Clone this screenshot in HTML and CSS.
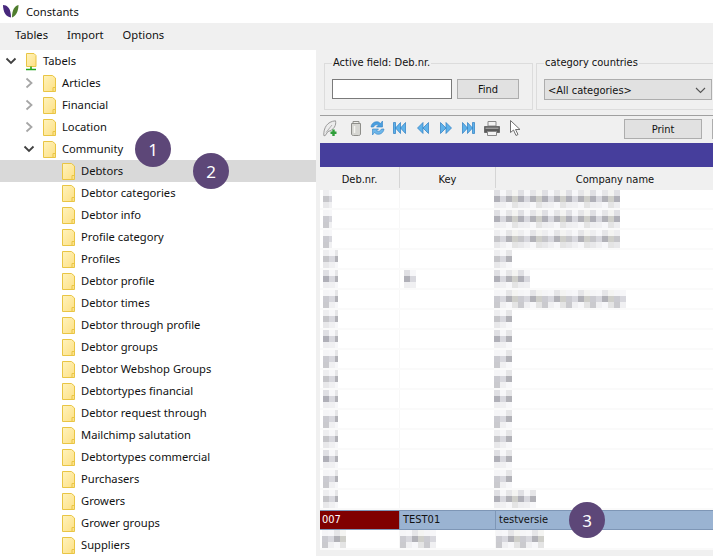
FILE: index.html
```html
<!DOCTYPE html>
<html>
<head>
  <title>Constants</title>
  <link rel="stylesheet" href="styles.css">
</head>
<body>
  <svg class="sprites" width="0" height="0">
    <defs>
      <linearGradient id="folderFill" x1="0" y1="0" x2="1" y2="1">
        <stop offset="0" stop-color="#fff3bd"/>
        <stop offset="1" stop-color="#fde084"/>
      </linearGradient>
      <symbol id="folder" viewBox="0 0 13 17">
        <path d="M0.5 0.5H9.5L12.5 3V16.5H0.5Z" fill="url(#folderFill)" stroke="#e9c544"/>
        <path d="M10 16V12.5H12.5" fill="none" stroke="#e9c544"/>
      </symbol>
      <symbol id="chev-right" viewBox="0 0 10 12">
        <path d="M2.5 1.5L7.5 6L2.5 10.5" fill="none" stroke="#a6a6a6" stroke-width="1.8"/>
      </symbol>
      <symbol id="chev-down" viewBox="0 0 12 10">
        <path d="M1.5 2.5L6 7L10.5 2.5" fill="none" stroke="#404040" stroke-width="1.8"/>
      </symbol>
    </defs>
  </svg>

  <div class="titlebar">
    <svg class="logo" width="16" height="13" viewBox="0 0 16 13">
      <path d="M0 0C4 0 8 3 8 12.5C3 12 0 7 0 0Z" fill="#47287c"/>
      <path d="M15.5 0C11.5 1 9 5 9 12.5C13 11 15.5 6 15.5 0Z" fill="#4f7d2e"/>
    </svg>
    <span>Constants</span>
  </div>

  <div class="menubar">
    <span>Tables</span>
    <span>Import</span>
    <span>Options</span>
  </div>

  <div class="main">
    <!-- Tree -->
    <div class="tree">
      <div class="node">
        <svg class="chev root-chev" width="12" height="10"><use href="#chev-down"/></svg>
        <svg class="root-icon" width="12" height="18" viewBox="0 0 12 18">
          <path d="M1.5 0.5H9L11 2.5V13.5H1.5Z" fill="url(#folderFill)" stroke="#e9c544"/>
          <path d="M6 13.5V16M1 16.5H11" fill="none" stroke="#22a51c" stroke-width="1.6"/>
        </svg>
        <span>Tabels</span>
      </div>
      <div class="node level-1">
        <svg class="chev" width="10" height="12"><use href="#chev-right"/></svg>
        <svg class="folder" width="13" height="17"><use href="#folder"/></svg>
        <span>Articles</span>
      </div>
      <div class="node level-1">
        <svg class="chev" width="10" height="12"><use href="#chev-right"/></svg>
        <svg class="folder" width="13" height="17"><use href="#folder"/></svg>
        <span>Financial</span>
      </div>
      <div class="node level-1">
        <svg class="chev" width="10" height="12"><use href="#chev-right"/></svg>
        <svg class="folder" width="13" height="17"><use href="#folder"/></svg>
        <span>Location</span>
      </div>
      <div class="node level-1 open">
        <svg class="chev" width="12" height="10"><use href="#chev-down"/></svg>
        <svg class="folder" width="13" height="17"><use href="#folder"/></svg>
        <span>Community</span>
      </div>
      <div class="node level-2 selected"><svg class="folder" width="13" height="17"><use href="#folder"/></svg><span>Debtors</span></div>
      <div class="node level-2"><svg class="folder" width="13" height="17"><use href="#folder"/></svg><span>Debtor categories</span></div>
      <div class="node level-2"><svg class="folder" width="13" height="17"><use href="#folder"/></svg><span>Debtor info</span></div>
      <div class="node level-2"><svg class="folder" width="13" height="17"><use href="#folder"/></svg><span>Profile category</span></div>
      <div class="node level-2"><svg class="folder" width="13" height="17"><use href="#folder"/></svg><span>Profiles</span></div>
      <div class="node level-2"><svg class="folder" width="13" height="17"><use href="#folder"/></svg><span>Debtor profile</span></div>
      <div class="node level-2"><svg class="folder" width="13" height="17"><use href="#folder"/></svg><span>Debtor times</span></div>
      <div class="node level-2"><svg class="folder" width="13" height="17"><use href="#folder"/></svg><span>Debtor through profile</span></div>
      <div class="node level-2"><svg class="folder" width="13" height="17"><use href="#folder"/></svg><span>Debtor groups</span></div>
      <div class="node level-2"><svg class="folder" width="13" height="17"><use href="#folder"/></svg><span>Debtor Webshop Groups</span></div>
      <div class="node level-2"><svg class="folder" width="13" height="17"><use href="#folder"/></svg><span>Debtortypes financial</span></div>
      <div class="node level-2"><svg class="folder" width="13" height="17"><use href="#folder"/></svg><span>Debtor request through</span></div>
      <div class="node level-2"><svg class="folder" width="13" height="17"><use href="#folder"/></svg><span>Mailchimp salutation</span></div>
      <div class="node level-2"><svg class="folder" width="13" height="17"><use href="#folder"/></svg><span>Debtortypes commercial</span></div>
      <div class="node level-2"><svg class="folder" width="13" height="17"><use href="#folder"/></svg><span>Purchasers</span></div>
      <div class="node level-2"><svg class="folder" width="13" height="17"><use href="#folder"/></svg><span>Growers</span></div>
      <div class="node level-2"><svg class="folder" width="13" height="17"><use href="#folder"/></svg><span>Grower groups</span></div>
      <div class="node level-2"><svg class="folder" width="13" height="17"><use href="#folder"/></svg><span>Suppliers</span></div>
    </div>

    <!-- Right side -->
    <div class="detail">
      <div class="filters">
        <fieldset class="group group-find">
          <legend>Active field: Deb.nr.</legend>
          <div class="group-row">
            <div class="text-input"></div>
            <div class="button find-button">Find</div>
          </div>
        </fieldset>
        <fieldset class="group group-category">
          <legend>category countries</legend>
          <div class="combo">
            <span>&lt;All categories&gt;</span>
            <svg width="11" height="7" viewBox="0 0 11 7"><path d="M1 1L5.5 5.5L10 1" fill="none" stroke="#555" stroke-width="1.1"/></svg>
          </div>
        </fieldset>
      </div>

      <div class="toolbar">
        <!-- new -->
        <svg class="tool tool-new" width="15" height="17" viewBox="0 0 15 17">
          <path d="M0.8 15.5C0.5 8 4 1.5 12.5 0.8C13.5 5 11 10 5 11.5L2 15.8Z" fill="#ececec" stroke="#9a9a9a"/>
          <path d="M3 12.5L9 5" stroke="#b0b0b0"/>
          <path d="M10.5 9.5V16M7.5 12.8H13.5" stroke="#2f9e3a" stroke-width="2.4"/>
        </svg>
        <!-- delete -->
        <svg class="tool tool-trash" width="12" height="16" viewBox="0 0 12 16">
          <path d="M1.5 3.5H10.5V14C10.5 15 9.5 15.5 8.5 15.5H3.5C2.5 15.5 1.5 15 1.5 14Z" fill="#d6d6d2" stroke="#8e8e8a"/>
          <path d="M3 1.5H9V3.5H3Z" fill="#eeeeea" stroke="#8e8e8a"/>
          <path d="M4.5 6V13" stroke="#f4f4f0" stroke-width="1.5"/>
        </svg>
        <!-- refresh -->
        <svg class="tool tool-refresh" width="15" height="16" viewBox="0 0 15 16">
          <path d="M1 7C1.5 3 5 1 8.5 2L10.5 3.5L12.5 1V7H6.5L8.5 5C6.5 4 4.5 5 3.5 7Z" fill="#4a9fdf" stroke="#2f7fc4" stroke-width="0.6"/>
          <path d="M14 9C13.5 13 10 15 6.5 14L4.5 12.5L2.5 15V9H8.5L6.5 11C8.5 12 10.5 11 11.5 9Z" fill="#6db7ea" stroke="#2f7fc4" stroke-width="0.6"/>
        </svg>
        <!-- first -->
        <svg class="tool tool-first" width="13" height="12" viewBox="0 0 13 12">
          <path d="M0.5 0.5H2.5V11.5H0.5ZM7.5 0.5V11.5L2.5 6ZM12.5 0.5V11.5L7.5 6Z" fill="#5fb2ea" stroke="#2b7cc2" stroke-width="0.7"/>
        </svg>
        <!-- prev -->
        <svg class="tool tool-prev" width="12" height="12" viewBox="0 0 12 12">
          <path d="M6 0.5V11.5L0.5 6ZM11.5 0.5V11.5L6 6Z" fill="#5fb2ea" stroke="#2b7cc2" stroke-width="0.7"/>
        </svg>
        <!-- next -->
        <svg class="tool tool-next" width="12" height="12" viewBox="0 0 12 12">
          <path d="M0.5 0.5V11.5L6 6ZM6 0.5V11.5L11.5 6Z" fill="#5fb2ea" stroke="#2b7cc2" stroke-width="0.7"/>
        </svg>
        <!-- last -->
        <svg class="tool tool-last" width="13" height="12" viewBox="0 0 13 12">
          <path d="M0.5 0.5V11.5L5.5 6ZM5.5 0.5V11.5L10.5 6ZM10.5 0.5H12.5V11.5H10.5Z" fill="#5fb2ea" stroke="#2b7cc2" stroke-width="0.7"/>
        </svg>
        <!-- print -->
        <svg class="tool tool-print" width="16" height="15" viewBox="0 0 16 15">
          <path d="M4 0.5H12V5H4Z" fill="#f2f2f2" stroke="#8a8a8a"/>
          <path d="M0.5 5.5H15.5V11.5H0.5Z" fill="#5b5b5b" stroke="#6b6b6b"/>
          <path d="M1.5 6.5H14.5V8H1.5Z" fill="#9a9a9a"/>
          <path d="M3.5 10.5H12.5V14.5H3.5Z" fill="#f4f4f4" stroke="#8a8a8a"/>
        </svg>
        <!-- pointer -->
        <svg class="tool tool-pointer" width="11" height="16" viewBox="0 0 11 16">
          <path d="M0.5 0.5V12.5L3.5 10L6 15.5L8 14.5L5.5 9.5H10Z" fill="#fff" stroke="#6f6f6f"/>
        </svg>
        <div class="button print-button">Print</div>
        <div class="button cut-button"></div>
      </div>

      <div class="banner"></div>

      <div class="grid-head">
        <div class="head-cell">Deb.nr.</div>
        <div class="head-cell">Key</div>
        <div class="head-cell last">Company name</div>
      </div>

      <div class="grid-body">
        <div class="row"><div class="cell"><i class="smudge id-s"></i></div><div class="cell"></div><div class="cell"><i class="smudge co w21 tone-a"></i></div></div>
        <div class="row"><div class="cell"><i class="smudge id-s tone-b"></i></div><div class="cell"></div><div class="cell"><i class="smudge co w21 tone-a"></i></div></div>
        <div class="row"><div class="cell"><i class="smudge id-s tone-b"></i></div><div class="cell"></div><div class="cell"><i class="smudge co w21"></i></div></div>
        <div class="row"><div class="cell"><i class="smudge id-l"></i></div><div class="cell"></div><div class="cell"><i class="smudge co w3"></i></div></div>
        <div class="row"><div class="cell"><i class="smudge id-l tone-a"></i></div><div class="cell"><i class="smudge key w2 tone-a"></i></div><div class="cell"><i class="smudge co w6 tone-a"></i></div></div>
        <div class="row"><div class="cell"><i class="smudge id-l tone-b"></i></div><div class="cell"></div><div class="cell"><i class="smudge co w22 tone-b"></i></div></div>
        <div class="row"><div class="cell"><i class="smudge id-l"></i></div><div class="cell"></div><div class="cell"><i class="smudge co w3"></i></div></div>
        <div class="row"><div class="cell"><i class="smudge id-l tone-a"></i></div><div class="cell"></div><div class="cell"><i class="smudge co w3 tone-a"></i></div></div>
        <div class="row"><div class="cell"><i class="smudge id-l tone-b"></i></div><div class="cell"></div><div class="cell"><i class="smudge co w3 tone-b"></i></div></div>
        <div class="row"><div class="cell"><i class="smudge id-l"></i></div><div class="cell"></div><div class="cell"><i class="smudge co w3 tone-b"></i></div></div>
        <div class="row"><div class="cell"><i class="smudge id-l tone-a"></i></div><div class="cell"></div><div class="cell"><i class="smudge co w3 tone-a"></i></div></div>
        <div class="row"><div class="cell"><i class="smudge id-l tone-b"></i></div><div class="cell"></div><div class="cell"><i class="smudge co w3 tone-b"></i></div></div>
        <div class="row"><div class="cell"><i class="smudge id-l"></i></div><div class="cell"></div><div class="cell"><i class="smudge co w3"></i></div></div>
        <div class="row"><div class="cell"><i class="smudge id-l tone-a"></i></div><div class="cell"></div><div class="cell"><i class="smudge co w3 tone-a"></i></div></div>
        <div class="row"><div class="cell"><i class="smudge id-l tone-b"></i></div><div class="cell"></div><div class="cell"><i class="smudge co w3 tone-b"></i></div></div>
        <div class="row"><div class="cell"><i class="smudge id-l"></i></div><div class="cell"></div><div class="cell"><i class="smudge co w7 tone-a"></i></div></div>
        <div class="row current">
          <div class="cell id">007</div>
          <div class="cell">TEST01</div>
          <div class="cell">testversie</div>
        </div>
        <div class="row"><div class="cell"><i class="smudge id-w tone-b"></i></div><div class="cell"><i class="smudge key-w w6 tone-b"></i></div><div class="cell"><i class="smudge co-w w8 tone-b"></i></div></div>
      </div>
    </div>
  </div>

  <div class="badge badge-1">1</div>
  <div class="badge badge-2">2</div>
  <div class="badge badge-3">3</div>
</body>
</html>
```

FILE: styles.css
```css
html, body {
  margin: 0;
  padding: 0;
  height: 556px;
  overflow: hidden;
}
body {
  position: relative;
  font-family: 'Noto Sans', sans-serif;
  font-size: 11.2px;
  color: #111;
  background-color: white;
}
.sprites {
  position: absolute;
}
.titlebar {
  display: flex;
  align-items: center;
  height: 23px;
  padding-left: 3px;
  gap: 7px;
}
.menubar {
  box-sizing: border-box;
  display: flex;
  align-items: center;
  gap: 19px;
  height: 27px;
  padding: 0 0 4px 15px;
  background-color: #f0f0f0;
}
.main {
  display: flex;
  height: 506px;
}

/* tree */
.tree {
  width: 316px;
  flex-shrink: 0;
  background-color: white;
}
.node {
  display: flex;
  align-items: center;
  height: 22px;
  white-space: nowrap;
}
.node span {
  padding-bottom: 2px;
}
.root-chev {
  margin-left: 5px;
  margin-right: 8px;
}
.root-icon {
  margin-top: 2px;
  margin-right: 6px;
}
.level-1 .chev {
  margin-left: 24px;
  margin-right: 9px;
}
.level-1.open .chev {
  margin-left: 23px;
  margin-right: 8px;
}
.folder {
  margin-right: 6px;
}
.level-2 {
  padding-left: 62px;
}
.selected {
  background-color: #d9d9d9;
}

/* right panel */
.detail {
  flex: 1;
  min-width: 0;
  margin-left: 4px;
  overflow: hidden;
  font-family: 'DejaVu Sans', sans-serif;
  font-stretch: condensed;
  font-size: 11px;
  background-color: #f0f0f0;
  box-shadow: -4px 0 0 #f0f0f0;
}
.filters {
  display: flex;
  gap: 3px;
  height: 65px;
  padding-left: 4px;
}
.group {
  box-sizing: border-box;
  height: 54px;
  margin: 6px 0 0 0;
  padding: 9px 7px 0 7px;
  border: 1px solid #dcdcdc;
  flex-shrink: 0;
}
.group legend {
  padding: 0 1px;
  line-height: 14px;
}
.group-find {
  width: 209px;
}
.group-category {
  width: 190px;
}
.group-row {
  display: flex;
  gap: 5px;
}
.text-input {
  box-sizing: border-box;
  width: 120px;
  height: 20px;
  background-color: white;
  border: 1px solid #7a7a7a;
}
.button {
  box-sizing: border-box;
  display: flex;
  align-items: center;
  justify-content: center;
  height: 20px;
  padding-top: 1px;
  background-color: #e1e1e1;
  border: 1px solid #adadad;
}
.find-button {
  width: 62px;
}
.combo {
  box-sizing: border-box;
  display: flex;
  align-items: center;
  justify-content: space-between;
  width: 168px;
  height: 21px;
  padding: 1px 5px 0 3px;
  background-color: #e1e1e1;
  border: 1px solid #adadad;
}
.toolbar {
  display: flex;
  align-items: center;
  height: 26px;
  padding-bottom: 1px;
  border-top: 1px solid #a0a0a0;
  white-space: nowrap;
}
.tool {
  flex-shrink: 0;
  margin-bottom: 2px;
}
.tool-new {
  margin-left: 3px;
}
.tool-trash {
  margin-left: 12px;
}
.tool-refresh {
  margin-left: 8px;
}
.tool-first {
  margin-left: 8px;
}
.tool-prev {
  margin-left: 11px;
}
.tool-next {
  margin-left: 11px;
}
.tool-last {
  margin-left: 10px;
}
.tool-print {
  margin-left: 9px;
}
.tool-pointer {
  margin-left: 10px;
}
.print-button {
  flex-shrink: 0;
  width: 78px;
  margin-left: 103px;
}
.cut-button {
  flex-shrink: 0;
  width: 20px;
  margin-left: 10px;
}
.banner {
  height: 24px;
  background-color: #463e9c;
}
.grid-head {
  display: grid;
  grid-template-columns: 80px 96px 238px;
  height: 23px;
}
.head-cell {
  display: flex;
  align-items: center;
  justify-content: center;
  padding-top: 3px;
  margin-bottom: 2px;
  border-right: 1px solid #d5d5d5;
}
.head-cell.last {
  border-right: none;
}
.grid-body {
  background-color: white;
}
.row {
  box-sizing: border-box;
  display: grid;
  grid-template-columns: 80px 96px 1fr;
  height: 20px;
  border-bottom: 2px solid #fafafa;
}
.cell {
  border-right: 1px solid #f7f7f7;
  min-width: 0;
}
.cell:last-child {
  border-right: none;
}

/* mosaic over the hidden customer data */
.smudge {
  display: block;
  height: 18px;
  margin-left: 3px;
  --top: #eeeef0;
  --mid: #c6c6ca;
  --bot: #e8e8ea;
  --alt: #f7f7f9;
  background-color: white;
  background-image:
    repeating-linear-gradient(90deg, var(--top) 0 6px, var(--alt) 6px 12px, #e6e6e8 12px 18px, #f4f4f2 18px 24px),
    repeating-linear-gradient(90deg, var(--mid) 0 6px, #d8d8de 6px 12px, #b2b2b8 12px 18px, #cfcfca 18px 24px),
    repeating-linear-gradient(90deg, var(--bot) 0 6px, #f0f0f2 6px 12px, var(--alt) 12px 18px, #e4e4e4 18px 24px);
  background-size: 100% 6px;
  background-position: 0 0, 0 6px, 0 12px;
  background-repeat: no-repeat;
}
.tone-a {
  --top: #e0e0e4;
  --mid: #b0b0b8;
  --bot: #eeeef0;
}
.tone-b {
  --top: #f5f5f7;
  --mid: #cbcbd1;
  --bot: #cacace;
}
.id-s { width: 9px; }
.id-l { width: 15px; }
.id-w { width: 24px; margin-left: 2px; }
.smudge.key {
  margin-left: 4px;
}
.smudge.key-w {
  margin-left: 0;
}
.smudge.co {
  margin-left: -2px;
}
.smudge.co-w {
  margin-left: 0;
}
.w2 { width: 12px; }
.w3 { width: 18px; }
.w6 { width: 36px; }
.w7 { width: 42px; }
.w8 { width: 48px; }
.w21 { width: 126px; }
.w22 { width: 132px; }

.row.current {
  line-height: 18px;
  background-color: #9ab3d2;
  border-top: 1px solid #7e96b6;
  border-bottom: 1px solid #7e96b6;
}
.current .cell {
  padding-left: 3px;
  border-right: 1px solid #7e96b6;
}
.current .cell:last-child {
  border-right: none;
}
.current .id {
  color: white;
  background-color: #800000;
  padding-left: 2px;
}

/* callouts */
.badge {
  position: absolute;
  display: flex;
  align-items: center;
  justify-content: center;
  width: 36px;
  height: 36px;
  border-radius: 50%;
  color: white;
  font-size: 17px;
  background-color: #5d4778;
}
.badge-1 {
  left: 135px;
  top: 131px;
}
.badge-2 {
  left: 193px;
  top: 153px;
}
.badge-3 {
  left: 569px;
  top: 502px;
}
```
